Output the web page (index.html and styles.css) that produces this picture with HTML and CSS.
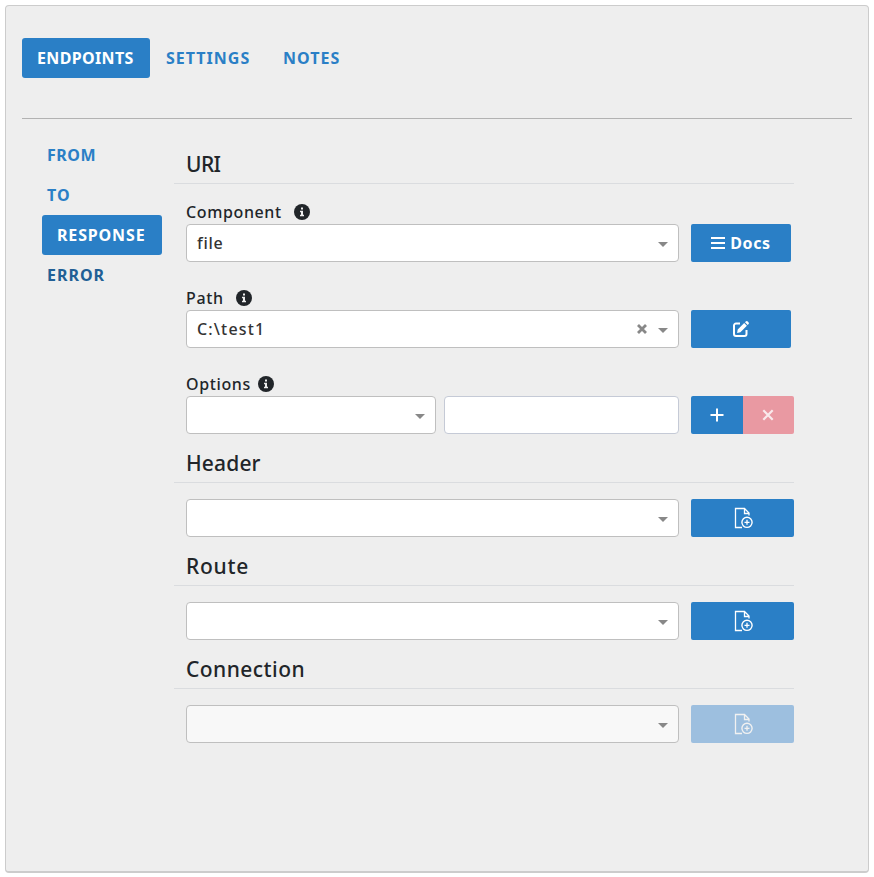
FILE: index.html
```html
<!DOCTYPE html>
<html lang="en">
<head>
<meta charset="utf-8">
<title>Endpoints</title>
<link rel="stylesheet" href="styles.css">
</head>
<body>
<svg class="defs" width="0" height="0" aria-hidden="true">
  <symbol id="info" viewBox="0 0 16 16"><circle cx="8" cy="8" r="8" fill="#212529"/><path d="M7 3.500h2v2H7zM6 6.800h3v4h1v1.400H6v-1.400h1V8.200H6z" fill="#eee"/></symbol>
  <symbol id="file-add" viewBox="0 0 20 22"><path d="M9 20.500H2.500V1.500h9l4.500 4.500v2.500M11.500 1.500v5h4.500" fill="none" stroke="currentColor" stroke-width="1.300"/><circle cx="14" cy="15.300" r="5.100" fill="none" stroke="currentColor" stroke-width="1.400"/><path d="M11.500 15.300h5M14 12.800v5" stroke="currentColor" stroke-width="1.300"/></symbol>
</svg>
<main class="panel">
  <nav class="tabs">
    <a class="tab active">ENDPOINTS</a>
    <a class="tab settings">SETTINGS</a>
    <a class="tab notes">NOTES</a>
  </nav>
  <hr class="rule">
  <div class="body">
    <nav class="side">
      <a class="step from">FROM</a>
      <a class="step">TO</a>
      <a class="step active">RESPONSE</a>
      <a class="step hover">ERROR</a>
    </nav>
    <section class="form">
      <h2 class="heading uri">URI</h2>
      <div class="label first"><span>Component</span><svg class="info wide"><use href="#info"/></svg></div>
      <div class="row">
        <div class="select"><span class="value file">file</span><i class="caret"></i></div>
        <button class="btn narrow"><svg class="menu" viewBox="0 0 14 12"><path d="M0 1h14M0 6h14M0 11h14" stroke="#fff" stroke-width="2"/></svg><span>Docs</span></button>
      </div>
      <div class="label"><span class="path">Path</span><svg class="info wide"><use href="#info"/></svg></div>
      <div class="row">
        <div class="select"><span class="value">C:\test1</span><svg class="clear" viewBox="0 0 10 10"><path d="M1 1l8 8M9 1L1 9" stroke="#888" stroke-width="2.800"/></svg><i class="caret"></i></div>
        <button class="btn narrow"><svg class="edit" viewBox="0 0 16 16"><path d="M7 2.500H3A2 2 0 0 0 1 4.500v8.500a2 2 0 0 0 2 2h8.500a2 2 0 0 0 2-2V9" fill="none" stroke="#fff" stroke-width="2"/><path d="M4.700 8.600L11.200 2.100l2.700 2.700-6.500 6.500-3.300.700zM12 1.300l.7-.7a1.500 1.500 0 0 1 2.100 0l.6.6a1.500 1.500 0 0 1 0 2.100l-.7.7z" fill="#fff"/></svg></button>
      </div>
      <div class="label"><span>Options</span><svg class="info"><use href="#info"/></svg></div>
      <div class="row">
        <div class="pair">
          <div class="select option"><i class="caret"></i></div>
          <div class="input"></div>
        </div>
        <div class="group">
          <button class="btn add"><svg viewBox="0 0 14 14"><path d="M7 .5v13M.5 7h13" stroke="#fff" stroke-width="2"/></svg></button>
          <button class="btn remove"><svg viewBox="0 0 14 14"><path d="M2.300 2.300l9.400 9.400M11.700 2.300l-9.400 9.400" stroke="#f9eaec" stroke-width="2.200"/></svg></button>
        </div>
      </div>
      <h2 class="heading header">Header</h2>
      <div class="row spaced">
        <div class="select"><i class="caret"></i></div>
        <button class="btn"><svg class="file-add"><use href="#file-add"/></svg></button>
      </div>
      <h2 class="heading route">Route</h2>
      <div class="row spaced">
        <div class="select"><i class="caret"></i></div>
        <button class="btn"><svg class="file-add"><use href="#file-add"/></svg></button>
      </div>
      <h2 class="heading">Connection</h2>
      <div class="row spaced">
        <div class="select disabled"><i class="caret"></i></div>
        <button class="btn faded"><svg class="file-add"><use href="#file-add"/></svg></button>
      </div>
    </section>
  </div>
</main>
</body>
</html>
```
FILE: styles.css
```css
* { box-sizing: border-box; }
body { margin: 0; padding: 5px; background: #fff; color: #212529; font: 500 16px/24px "Noto Sans", sans-serif; }
.defs { display: block; }
.panel { width: 864px; height: 868px; padding: 32px 16px; background: #eee; border: 1px solid #ccc; border-bottom-width: 2px; border-radius: 4px; }
.tabs { display: flex; height: 40px; font-weight: 700; }
.tab { color: #2a7fc6; line-height: 40px; padding: 0 16px; white-space: nowrap; letter-spacing: 1px; }
.tab.active { width: 128px; padding: 0 15px; color: #fff; background: #2a7fc6; border-radius: 3px; letter-spacing: .35px; }
.tab.settings { width: 117px; }
.rule { margin: 40px 0 16px; border: 0; border-top: 1px solid #b2b2b2; }
.body { display: flex; padding-left: 20px; }
.side { width: 120px; margin-right: 12px; font-weight: 700; }
.step { display: block; height: 40px; line-height: 40px; padding-left: 5px; color: #2a7fc6; letter-spacing: 1px; }
.step.from { letter-spacing: .5px; }
.step.active { padding-left: 15px; color: #fff; background: #2a7fc6; border-radius: 3px; letter-spacing: .85px; }
.step.hover { color: #215f95; }
.form { width: 620px; }
.heading { height: 49px; margin: 0; padding: 15px 12px 0; font-size: 21px; font-weight: 500; line-height: 28px; letter-spacing: .45px; border-bottom: 1px solid #dadcdf; }
.heading.uri { letter-spacing: -.6px; }
.heading.header { letter-spacing: .15px; }
.heading.route { letter-spacing: .75px; }
.label { display: flex; height: 48px; padding: 24px 12px 0; letter-spacing: .62px; }
.label.first { height: 40px; padding-top: 16px; }
.info { width: 16px; height: 16px; margin: 4px 0 0 7px; }
.info.wide { margin-left: 12px; }
.row { display: flex; padding-left: 12px; gap: 12px; }
.row.spaced { padding-top: 16px; }
.select, .input { height: 38px; background: #fff; border: 1px solid #bfbfbf; border-radius: 4px; }
.select { display: flex; align-items: center; width: 493px; padding: 0 10px; color: #333; }
.value { letter-spacing: 1.15px; }
.value.file { letter-spacing: .7px; }
.caret { width: 0; margin-left: auto; margin-top: 2px; border: 5px solid transparent; border-top-color: #888; border-bottom: 0; }
.clear { width: 10px; height: 10px; margin-left: auto; }
.clear + .caret { margin-left: 11px; }
.pair { display: flex; gap: 8px; width: 493px; }
.option { width: 250px; }
.input { width: 235px; border-color: #c5cad6; }
.disabled { background: #f8f8f8; }
.btn { display: flex; align-items: center; justify-content: center; width: 103px; height: 38px; padding: 0; border: 0; border-radius: 2px; background: #2a7fc6; color: #fff; font: 700 16px/24px "Noto Sans", sans-serif; letter-spacing: .6px; }
.narrow { width: 100px; }
.menu { width: 14px; height: 12px; margin-right: 5px; }
.edit { width: 16px; height: 16px; }
.group { display: flex; }
.group svg { width: 14px; height: 14px; }
.add { width: 52px; border-radius: 2px 0 0 2px; }
.remove { width: 51px; padding-right: 1px; border-radius: 0 2px 2px 0; background: #e999a2; }
.file-add { width: 20px; height: 22px; }
.faded { background: #9dbfdf; color: #f1f1f1; }
```
